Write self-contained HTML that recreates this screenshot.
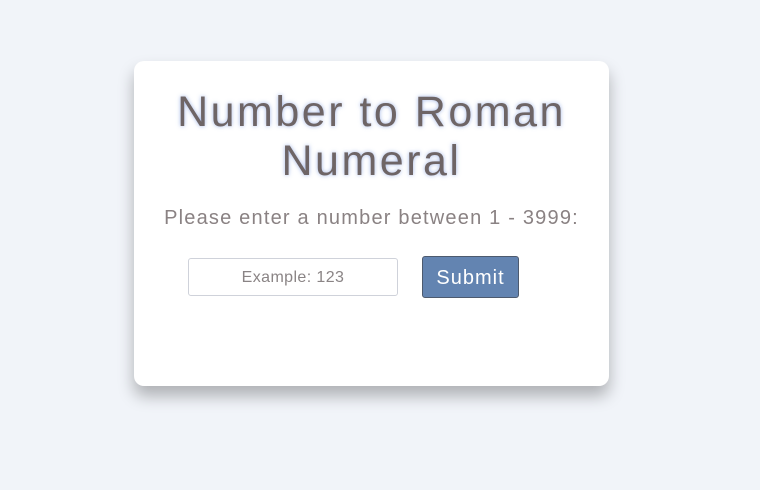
<!DOCTYPE html>
<html><head><meta charset="utf-8"><style>
html,body{margin:0;padding:0;}
body{width:760px;height:490px;background:#f1f4f9;font-family:"Liberation Sans",sans-serif;position:relative;overflow:hidden;}
.card{position:absolute;left:134px;top:61px;width:475px;height:325px;background:#fff;border-radius:10px;box-shadow:0 10px 16px rgba(0,0,0,0.28);}
h1{position:absolute;left:0;right:0;top:27px;margin:0;text-align:center;font-weight:normal;font-size:43px;line-height:49px;color:#6e6566;text-shadow:0 0 4px rgba(120,150,220,0.7);letter-spacing:2.5px;}
.sub{position:absolute;left:0;right:0;top:146px;text-align:center;font-size:20px;color:#8a8283;letter-spacing:1.2px;}
.inp{position:absolute;left:54px;top:197px;width:208px;height:36px;border:1px solid #cfd2da;border-radius:3px;text-align:center;line-height:37px;font-size:16px;letter-spacing:0.4px;color:#8a8485;}
.btn{position:absolute;left:288px;top:195px;width:95px;height:40px;background:#6384b1;border:1px solid #4d5a6e;border-radius:3px;color:#fff;font-size:20px;letter-spacing:1px;text-align:center;line-height:43px;}
</style></head><body>
<div class="card">
<h1>Number to Roman<br>Numeral</h1>
<div class="sub">Please enter a number between 1 - 3999:</div>
<div class="inp">Example: 123</div>
<div class="btn">Submit</div>
</div>
</body></html>
